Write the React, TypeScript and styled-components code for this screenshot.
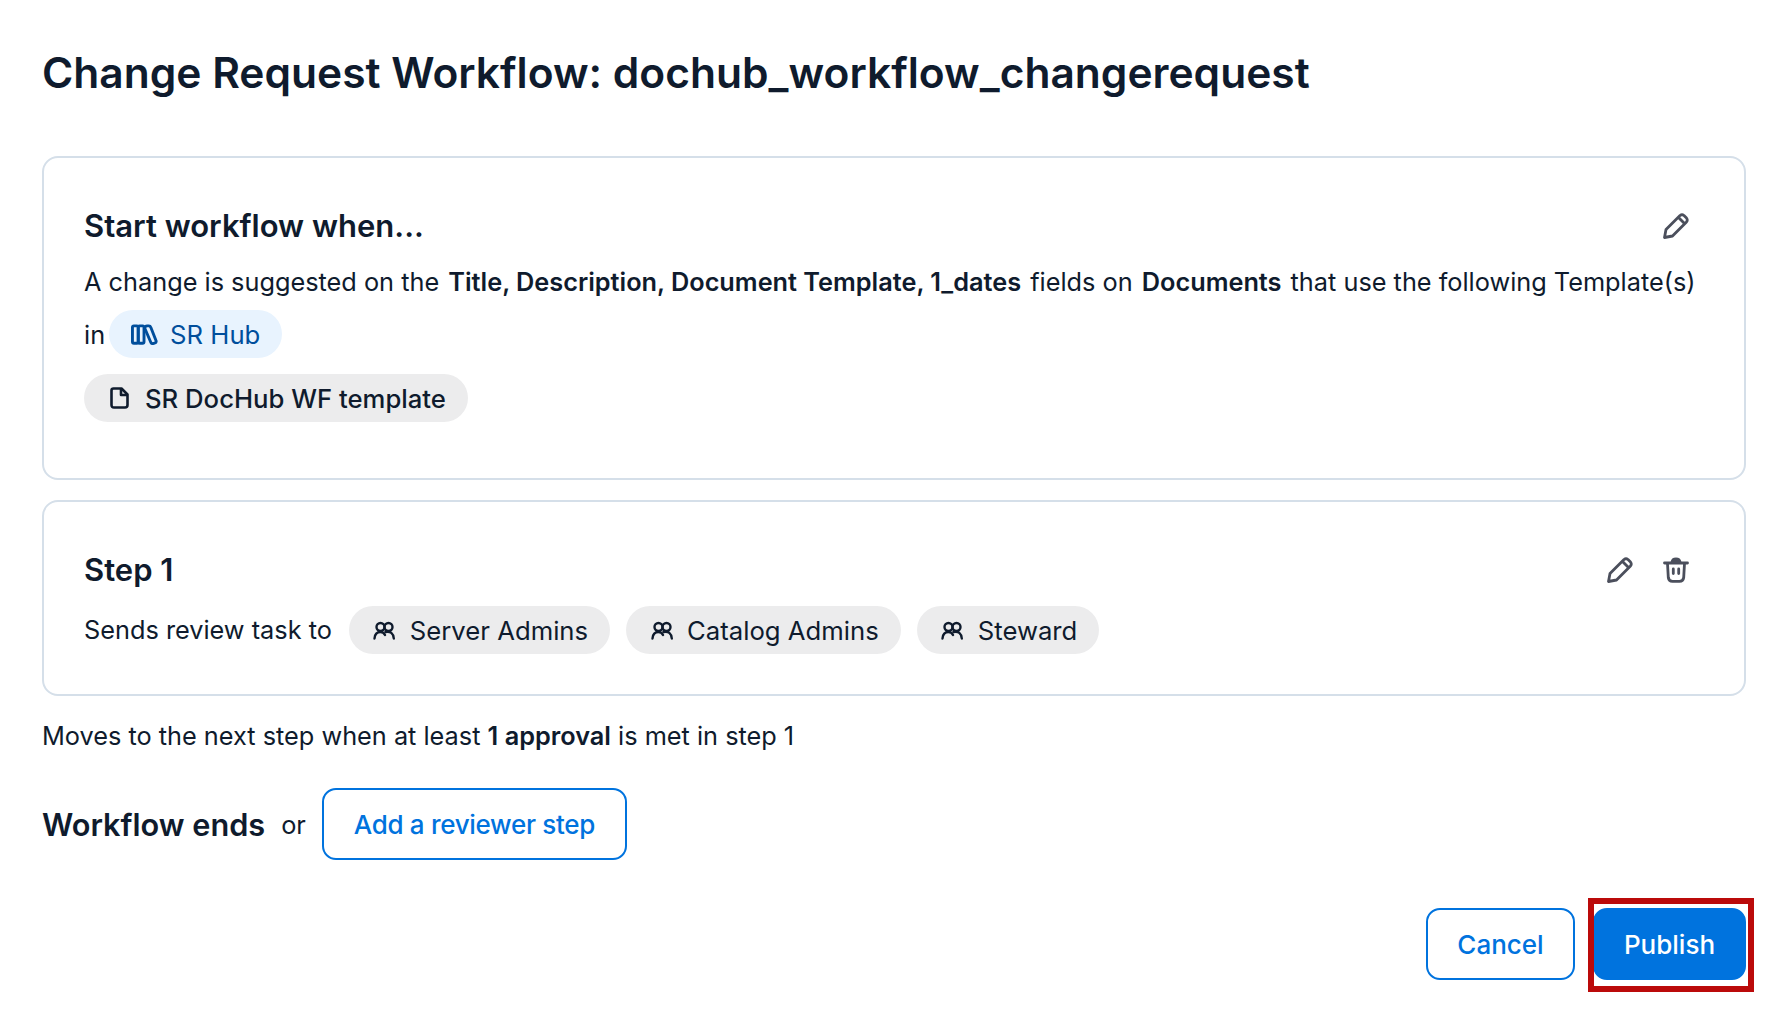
import React from "react";
import styled, { createGlobalStyle } from "styled-components";

const GlobalStyle = createGlobalStyle`
  html, body {
    margin: 0;
    padding: 0;
    background: #ffffff;
  }

  body {
    font-family: Inter, "Liberation Sans", sans-serif;
    color: #0f1b2d;
  }

  * {
    box-sizing: border-box;
  }
`;

const Page = styled.div`
  width: 1782px;
  height: 1016px;
  padding: 45px 36px 0 42px;
  overflow: hidden;
`;

const Title = styled.h1`
  margin: 0 0 55px;
  font-size: 42.5px;
  line-height: 56px;
  font-weight: 600;
`;

const Card = styled.section<{ $height: number }>`
  height: ${(p) => p.$height}px;
  border: 2px solid #d5dfe9;
  border-radius: 16px;
  padding: 50px 40px 0;
  margin-bottom: 20px;
`;

const CardHeader = styled.div`
  display: flex;
  align-items: center;
  justify-content: space-between;
  height: 36px;
  margin-bottom: 20px;
`;

const CardTitle = styled.h2`
  margin: 0;
  font-size: 31px;
  line-height: 36px;
  font-weight: 600;
`;

const CardActions = styled.div`
  display: flex;
  align-items: center;
  gap: 30px;
  padding-right: 15px;
  color: #4b4f5c;
`;

const Sentence = styled.p`
  margin: 0;
  font-size: 25.3px;
  line-height: 36px;
  font-weight: 400;
  white-space: nowrap;

  strong {
    font-weight: 600;
    margin: 0 2px;
  }
`;

const SpaceRow = styled.div`
  display: flex;
  align-items: center;
  gap: 4px;
  margin-top: 10px;
  font-size: 25.3px;
`;

const Chip = styled.span<{ $tone?: "grey" | "blue"; $weight?: number }>`
  display: inline-flex;
  align-items: center;
  height: 48px;
  padding: 0 22px;
  gap: 12px;
  border-radius: 24px;
  font-size: 25.7px;
  font-weight: ${(p) => p.$weight ?? 400};
  white-space: nowrap;
  background: ${(p) => (p.$tone === "blue" ? "#e8f3fe" : "#ececed")};
  color: ${(p) => (p.$tone === "blue" ? "#004e9c" : "#0f1b2d")};
`;

const ChipIcon = styled.span`
  display: flex;
  align-items: center;
  justify-content: center;
  width: 27px;
`;

const TemplateRow = styled.div`
  display: flex;
  margin-top: 16px;
`;

const ReviewerRow = styled.div`
  display: flex;
  align-items: center;
  gap: 16px;
  margin-top: -2px;
`;

const ReviewerLabel = styled(Sentence)`
  margin-right: 1px;
`;

const ApprovalNote = styled(Sentence)`
  margin-top: 22px;

  strong {
    margin: 0;
  }
`;

const EndRow = styled.div`
  display: flex;
  align-items: center;
  margin-top: 34px;
`;

const EndLabel = styled.span`
  font-size: 30.7px;
  font-weight: 600;
`;

const OrText = styled.span`
  font-size: 25.3px;
  margin: 0 16px;
`;

const Button = styled.button<{ $primary?: boolean; $width: number }>`
  position: relative;
  width: ${(p) => p.$width}px;
  height: 72px;
  border: 2px solid #0073de;
  border-radius: 14px;
  padding: 0;
  font-family: inherit;
  font-size: 26px;
  font-weight: 500;
  background: ${(p) => (p.$primary ? "#0073de" : "#ffffff")};
  color: ${(p) => (p.$primary ? "#ffffff" : "#0073de")};
`;

const AddButton = styled(Button)`
  letter-spacing: -0.3px;
`;

const Footer = styled.div`
  display: flex;
  justify-content: flex-end;
  gap: 18px;
  margin-top: 48px;
`;

// annotation drawn on top of the screenshot
const Highlight = styled.span`
  position: absolute;
  top: -12px;
  left: -7px;
  right: -10px;
  bottom: -14px;
  border: 6px solid #bb0a0a;
  pointer-events: none;
`;

const PencilIcon = () => (
  <svg width="26" height="26" viewBox="0 0 26 26" fill="none" stroke="currentColor" strokeWidth="2.8" strokeLinejoin="round">
    <path d="M1.5 24.5 L3 16.5 L17 2.5 Q19 1 21 2.5 L23.5 5 Q25 7 23.5 9 L9.5 23 Z" />
    <path d="M15.5 4.5 L21.5 10.5" />
  </svg>
);

const TrashIcon = () => (
  <svg width="26" height="26" viewBox="0 0 26 26" fill="none" stroke="currentColor" strokeWidth="2.8" strokeLinecap="round" strokeLinejoin="round">
    <path d="M1.5 6 H24.5" />
    <path d="M9 5 Q9.5 1.8 13 1.8 Q16.5 1.8 17 5 Z" fill="currentColor" />
    <path d="M4.5 6.5 L5.3 20.5 Q5.8 24.3 9.5 24.3 H16.5 Q20.2 24.3 20.7 20.5 L21.5 6.5" />
    <path d="M10.3 12 V16.5 M15.7 12 V16.5" />
  </svg>
);

const LibraryIcon = () => (
  <svg width="28" height="21" viewBox="0 0 28 21" fill="none" stroke="currentColor" strokeWidth="3" strokeLinejoin="round">
    <rect x="1.5" y="1.5" width="6" height="18" rx="1.5" />
    <rect x="7.5" y="1.5" width="6" height="18" rx="1.5" />
    <path d="M14.5 3 Q15 1.5 16.5 1.5 H18.5 Q20 1.5 20.5 3 L26 17 Q26.5 19 24.5 19.5 L22.5 20 Q21 20 20.5 18.5 L14.5 4.5 Z" />
  </svg>
);

const DocumentIcon = () => (
  <svg width="19" height="22" viewBox="0 0 19 22" fill="none" stroke="currentColor" strokeWidth="2.6" strokeLinejoin="round">
    <path d="M3.5 1.5 H11.5 L17.5 7.5 V18 Q17.5 20.5 15 20.5 H4 Q1.5 20.5 1.5 18 V3.5 Q1.5 1.5 3.5 1.5 Z" />
    <path d="M11 1.5 V8 H17.5" />
  </svg>
);

const GroupIcon = () => (
  <svg width="22" height="19" viewBox="0 0 22 19" fill="none" stroke="currentColor" strokeWidth="2.4" strokeLinecap="round">
    <circle cx="7.5" cy="6" r="4" />
    <circle cx="15.5" cy="6" r="4" />
    <path d="M1.5 17.5 Q2 11 7.5 11 Q10.5 11 12 14" />
    <path d="M12.5 11 Q20 9.5 20.8 17.5" />
  </svg>
);

const reviewers = ["Server Admins", "Catalog Admins", "Steward"];

function App() {
  return (
    <Page>
      <GlobalStyle />
      <Title>Change Request Workflow: dochub_workflow_changerequest</Title>
      <Card $height={324}>
        <CardHeader>
          <CardTitle>Start workflow when...</CardTitle>
          <CardActions>
            <PencilIcon />
          </CardActions>
        </CardHeader>
        <Sentence>
          A change is suggested on the <strong>Title, Description, Document Template, 1_dates</strong> fields on{" "}
          <strong>Documents</strong> that use the following Template(s)
        </Sentence>
        <SpaceRow>
          in
          <Chip $tone="blue">
            <ChipIcon>
              <LibraryIcon />
            </ChipIcon>
            SR Hub
          </Chip>
        </SpaceRow>
        <TemplateRow>
          <Chip $weight={500}>
            <ChipIcon>
              <DocumentIcon />
            </ChipIcon>
            SR DocHub WF template
          </Chip>
        </TemplateRow>
      </Card>
      <Card $height={196}>
        <CardHeader>
          <CardTitle>Step 1</CardTitle>
          <CardActions>
            <PencilIcon />
            <TrashIcon />
          </CardActions>
        </CardHeader>
        <ReviewerRow>
          <ReviewerLabel>Sends review task to</ReviewerLabel>
          {reviewers.map((name) => (
            <Chip key={name}>
              <ChipIcon>
                <GroupIcon />
              </ChipIcon>
              {name}
            </Chip>
          ))}
        </ReviewerRow>
      </Card>
      <ApprovalNote>
        Moves to the next step when at least <strong>1 approval</strong> is met in step 1
      </ApprovalNote>
      <EndRow>
        <EndLabel>Workflow ends</EndLabel>
        <OrText>or</OrText>
        <AddButton $width={305}>Add a reviewer step</AddButton>
      </EndRow>
      <Footer>
        <Button $width={149}>Cancel</Button>
        <Button $primary $width={153}>
          Publish
          <Highlight />
        </Button>
      </Footer>
    </Page>
  );
}

export default App;
